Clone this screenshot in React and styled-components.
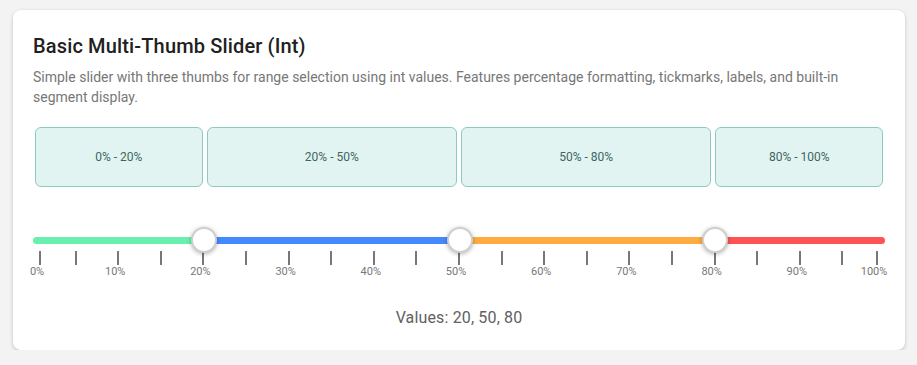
import React from "react";
import styled, { createGlobalStyle } from "styled-components";

const Global = createGlobalStyle`
  html, body { margin: 0; padding: 0; background: #f3f3f3; }
  body { font-family: Roboto, "Noto Sans", Arial, sans-serif; }
  * { box-sizing: border-box; }
`;

const Page = styled.div`
  padding: 10px 12px 0 13px;
`;

const Card = styled.div`
  background: #fff;
  border-radius: 8px;
  box-shadow: 0 2px 4px rgba(0, 0, 0, 0.16), 0 0 2px rgba(0, 0, 0, 0.08);
  padding: 20px 20px 20px;
  display: flex;
  flex-direction: column;
`;

const Title = styled.h2`
  margin: 0 0 5px;
  font-size: 20px;
  line-height: 32px;
  font-weight: 500;
  letter-spacing: 0.15px;
  color: #212121;
`;

const Description = styled.p`
  margin: 0;
  font-size: 14px;
  line-height: 20px;
  color: #777;
`;

const SegmentRow = styled.div`
  display: flex;
  margin-top: 20px;
`;

const SegmentBox = styled.div`
  flex: ${(p) => p.$grow} 1 0;
  margin: 0 2px;
  height: 60px;
  border: 1px solid #8ccac2;
  border-radius: 6px;
  background: #e2f4f1;
  display: flex;
  align-items: center;
  justify-content: center;
  font-size: 12px;
  color: #3d6660;
`;

const SliderArea = styled.div`
  position: relative;
  margin-top: 40px;
  height: 26px;
`;

const Track = styled.div`
  display: flex;
  margin-top: 10px;
  height: 7px;
  border-radius: 4px;
  overflow: hidden;
`;

const TrackFill = styled.div`
  flex: ${(p) => p.$grow} 1 0;
  background: ${(p) => p.$color};
`;

const Thumb = styled.div`
  position: absolute;
  top: 0;
  width: 26px;
  height: 26px;
  margin-left: -13px;
  border-radius: 50%;
  background: #fff;
  border: 2px solid #cfcfcf;
  box-shadow: 0 1px 4px rgba(0, 0, 0, 0.3);
  z-index: 2;
`;

const Scale = styled.div`
  position: relative;
  margin-top: -2px;
  height: 30px;
`;

const Tick = styled.div`
  position: absolute;
  top: 0;
  width: 2px;
  height: 14px;
  margin-left: -1px;
  background: #777;
`;

const TickLabel = styled.div`
  position: absolute;
  top: 14px;
  transform: translateX(-50%);
  font-size: 11px;
  line-height: 13px;
  color: #777;
  white-space: nowrap;
`;

const Values = styled.div`
  margin-top: 25px;
  text-align: center;
  font-size: 16px;
  line-height: 24px;
  letter-spacing: 0.15px;
  color: #616161;
`;

const values = [20, 50, 80];
const bounds = [0, ...values, 100];
const colors = ["#69f0ae", "#448aff", "#ffab40", "#ff5252"];
const segments = bounds.slice(0, -1).map((b, i) => ({
  from: b,
  to: bounds[i + 1],
  color: colors[i],
}));

const ticks = Array.from({ length: 21 }, (_, i) => i * 5);
const tickPos = (p) =>
  p === 0 ? "7px" : p === 100 ? "calc(100% - 8px)" : `${p}%`;
const labelPos = (p) =>
  p === 0 ? "4px" : p === 100 ? "calc(100% - 11px)" : `calc(${p}% - 3px)`;

export default function App() {
  return (
    <>
      <Global />
      <Page>
        <Card>
          <Title>Basic Multi-Thumb Slider (Int)</Title>
          <Description>
            Simple slider with three thumbs for range selection using int values. Features percentage formatting, tickmarks, labels, and built-in segment display.
          </Description>
          <SegmentRow>
            {segments.map((s) => (
              <SegmentBox key={s.from} $grow={s.to - s.from}>
                {s.from}% - {s.to}%
              </SegmentBox>
            ))}
          </SegmentRow>
          <SliderArea>
            <Track>
              {segments.map((s) => (
                <TrackFill key={s.from} $grow={s.to - s.from} $color={s.color} />
              ))}
            </Track>
            {values.map((v) => (
              <Thumb key={v} style={{ left: `calc(${v}% + 0.5px)` }} />
            ))}
          </SliderArea>
          <Scale>
            {ticks.map((t) => (
              <Tick key={t} style={{ left: tickPos(t) }} />
            ))}
            {ticks
              .filter((t) => t % 10 === 0)
              .map((t) => (
                <TickLabel key={t} style={{ left: labelPos(t) }}>
                  {t}%
                </TickLabel>
              ))}
          </Scale>
          <Values>Values: {values.join(", ")}</Values>
        </Card>
      </Page>
    </>
  );
}
